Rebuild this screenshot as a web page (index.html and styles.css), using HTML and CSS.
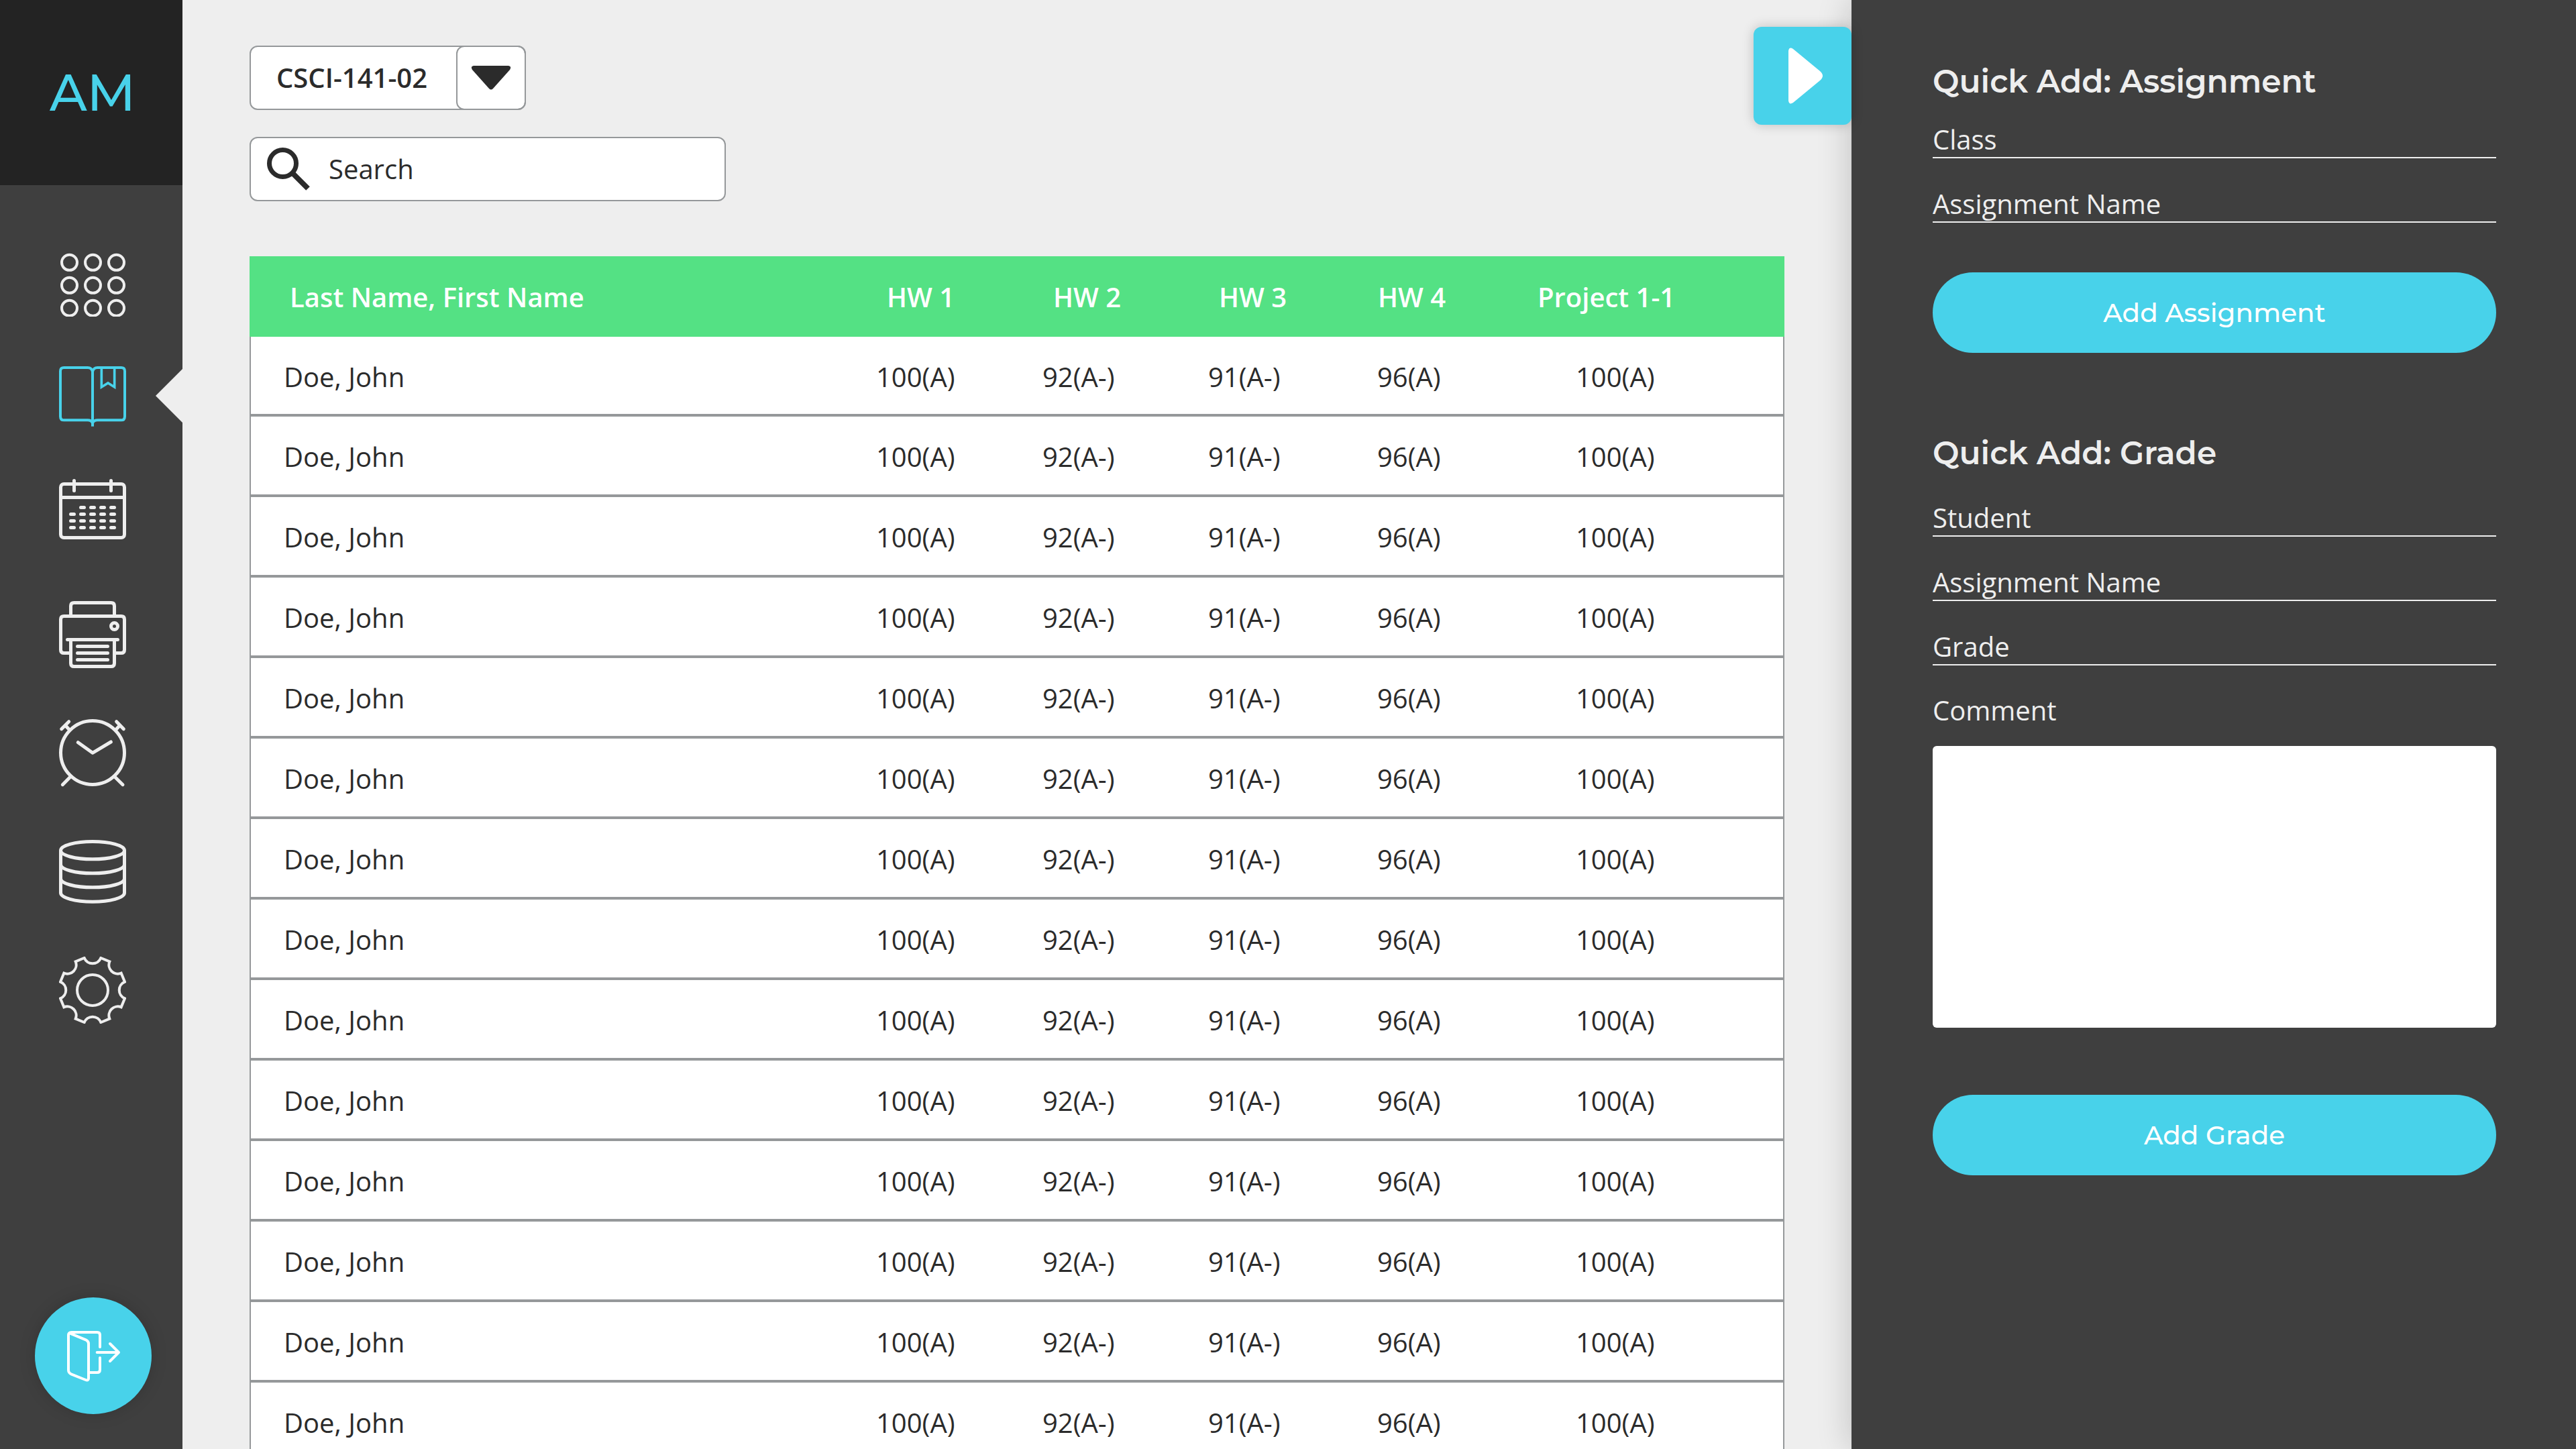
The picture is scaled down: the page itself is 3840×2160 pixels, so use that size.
FILE: index.html
```html
<!DOCTYPE html>
<html lang="en">
<head>
<meta charset="utf-8">
<meta name="viewport" content="width=device-width, initial-scale=1">
<title>Gradebook</title>
<link rel="stylesheet" href="styles.css">
</head>
<body>
<div class="app">
  <aside class="sidebar">
    <a class="logo" href="#">AM</a>
    <nav class="nav" aria-label="Main">
      <a class="nav-link" href="#" aria-label="Dashboard">
        <svg class="icon" width="100" height="96" viewBox="84 78 300 288" stroke-width="12">
          <circle cx="130.5" cy="124" r="34.5"/><circle cx="235.5" cy="124" r="34.5"/><circle cx="340.5" cy="124" r="34.5"/>
          <circle cx="130.5" cy="226" r="34.5"/><circle cx="235.5" cy="226" r="34.5"/><circle cx="340.5" cy="226" r="34.5"/>
          <circle cx="130.5" cy="328" r="34.5"/><circle cx="235.5" cy="328" r="34.5"/><circle cx="340.5" cy="328" r="34.5"/>
        </svg>
      </a>
      <a class="nav-link nav-link--active" href="#" aria-label="Gradebook" aria-current="page">
        <svg class="icon" width="100" height="94" viewBox="84 588 300 282" stroke-width="12">
          <path d="M234 612Q230 594 212 594H106Q90 594 90 610V812Q90 829 106 829H212Q228 829 234 842"/>
          <path d="M234 612Q238 594 256 594H362Q378 594 378 610V812Q378 829 362 829H256Q240 829 234 842"/>
          <path d="M234 604V857"/>
          <path stroke-width="11" d="M274 594V681L303 663L332 681V594"/>
        </svg>
      </a>
      <a class="nav-link" href="#" aria-label="Calendar">
        <svg class="icon" width="100" height="108" viewBox="84 1092 300 324" stroke-width="15" stroke-linecap="round">
          <rect x="91.5" y="1114.5" width="285" height="240" rx="14"/>
          <path d="M92 1174.5H376M151.5 1099.5V1144.5M316.5 1099.5V1144.5"/>
          <path d="M181.5 1219.5h15m30 0h15m30 0h15m30 0h15M136.5 1249.5h15m30 0h15m30 0h15m30 0h15m30 0h15M136.5 1279.5h15m30 0h15m30 0h15m30 0h15m30 0h15M136.5 1309.5h15m30 0h15m30 0h15m30 0h15m30 0h15"/>
        </svg>
      </a>
      <a class="nav-link" href="#" aria-label="Print">
        <svg class="icon" width="100" height="102" viewBox="84 108 300 306" stroke-width="15">
          <path d="M136.5 340.5H106Q91.5 340.5 91.5 326V190Q91.5 175.5 106 175.5H362Q376.5 175.5 376.5 190V326Q376.5 340.5 362 340.5H331.5"/>
          <path d="M136.5 175V130Q136.5 115.5 151 115.5H317Q331.5 115.5 331.5 130V175M136.5 280V386Q136.5 400.5 151 400.5H317Q331.5 400.5 331.5 386V280"/>
          <path stroke-linecap="round" d="M121.5 280.5H346.5M166.5 310.5H301.5M166.5 340.5H301.5M166.5 370.5H301.5"/>
          <circle cx="331.5" cy="220.5" r="15"/>
        </svg>
      </a>
      <a class="nav-link" href="#" aria-label="Reminders">
        <svg class="icon" width="100" height="106" viewBox="84 636 300 318" stroke-width="15" stroke-linecap="round" stroke-linejoin="round">
          <circle cx="234" cy="786" r="142.5"/>
          <path d="M169 740L234 787L316 738M137 892L100 929M331 892L369 929M95 680L128 647M114 666L130 683M341 647L373 680M354 666L338 683"/>
        </svg>
      </a>
      <a class="nav-link" href="#" aria-label="Data">
        <svg class="icon" width="100" height="100" viewBox="84 96 300 300" stroke-width="15">
          <ellipse cx="234" cy="143" rx="142.5" ry="39.5"/>
          <path d="M91.5 143V333A142.5 39.5 0 0 0 376.5 333V143M91.5 206A142.5 39.5 0 0 0 376.5 206M91.5 269A142.5 39.5 0 0 0 376.5 269"/>
        </svg>
      </a>
      <a class="nav-link" href="#" aria-label="Settings">
        <svg class="icon" width="100" height="100" viewBox="84 618 300 300" stroke-width="12">
          <circle cx="234" cy="768" r="69"/>
          <path d="M271 624L310 640A40 40 0 0 0 362 692L378 731A40 40 0 0 0 378 805L362 844A40 40 0 0 0 310 896L271 912A40 40 0 0 0 197 912L158 896A40 40 0 0 0 106 844L90 805A40 40 0 0 0 90 731L106 692A40 40 0 0 0 158 640L197 624A40 40 0 0 0 271 624Z"/>
        </svg>
      </a>
    </nav>
    <button class="logout" type="button" aria-label="Log out">
      <svg class="icon" width="174" height="174" viewBox="66 102 522 522" stroke-width="12" stroke-linecap="round" stroke-linejoin="round">
        <path d="M222 262L294 292Q306 298 306 309V464Q306 476 293 471L230 446Q216 440 216 427V272Q216 258 230 258H345Q357 258 357 270V324M357 372V425Q357 438 345 438H308"/>
        <path d="M344 348H440M402 309L441 348L402 387"/>
      </svg>
    </button>
  </aside>

  <main class="main">
    <div class="class-picker">
      <select class="class-select" aria-label="Class">
        <option>CSCI-141-02</option>
      </select>
      <span class="class-arrow">
        <svg width="60" height="36" viewBox="0 0 60 36"><path fill="#2b2b2b" d="M4 0H56Q61 1 58 6L33 34Q30 37 27 34L2 6Q-1 1 4 0Z"/></svg>
      </span>
    </div>
    <label class="search">
      <svg width="64" height="64" viewBox="0 0 64 64" fill="none" stroke="#2b2b2b">
        <circle cx="23.5" cy="23.5" r="20" stroke-width="7"/>
        <path stroke-width="8" d="M38 38L61 61"/>
      </svg>
      <input class="search-input" type="search" placeholder="Search" aria-label="Search">
    </label>

    <table class="grades">
      <colgroup>
        <col><col class="col-hw1"><col class="col-hw2"><col class="col-hw3"><col class="col-hw4"><col class="col-project">
      </colgroup>
      <thead>
        <tr><th>Last Name, First Name</th><th>HW 1</th><th>HW 2</th><th>HW 3</th><th>HW 4</th><th>Project 1-1</th></tr>
      </thead>
      <tbody>
        <tr><td>Doe, John</td><td>100(A)</td><td>92(A-)</td><td>91(A-)</td><td>96(A)</td><td>100(A)</td></tr>
        <tr><td>Doe, John</td><td>100(A)</td><td>92(A-)</td><td>91(A-)</td><td>96(A)</td><td>100(A)</td></tr>
        <tr><td>Doe, John</td><td>100(A)</td><td>92(A-)</td><td>91(A-)</td><td>96(A)</td><td>100(A)</td></tr>
        <tr><td>Doe, John</td><td>100(A)</td><td>92(A-)</td><td>91(A-)</td><td>96(A)</td><td>100(A)</td></tr>
        <tr><td>Doe, John</td><td>100(A)</td><td>92(A-)</td><td>91(A-)</td><td>96(A)</td><td>100(A)</td></tr>
        <tr><td>Doe, John</td><td>100(A)</td><td>92(A-)</td><td>91(A-)</td><td>96(A)</td><td>100(A)</td></tr>
        <tr><td>Doe, John</td><td>100(A)</td><td>92(A-)</td><td>91(A-)</td><td>96(A)</td><td>100(A)</td></tr>
        <tr><td>Doe, John</td><td>100(A)</td><td>92(A-)</td><td>91(A-)</td><td>96(A)</td><td>100(A)</td></tr>
        <tr><td>Doe, John</td><td>100(A)</td><td>92(A-)</td><td>91(A-)</td><td>96(A)</td><td>100(A)</td></tr>
        <tr><td>Doe, John</td><td>100(A)</td><td>92(A-)</td><td>91(A-)</td><td>96(A)</td><td>100(A)</td></tr>
        <tr><td>Doe, John</td><td>100(A)</td><td>92(A-)</td><td>91(A-)</td><td>96(A)</td><td>100(A)</td></tr>
        <tr><td>Doe, John</td><td>100(A)</td><td>92(A-)</td><td>91(A-)</td><td>96(A)</td><td>100(A)</td></tr>
        <tr><td>Doe, John</td><td>100(A)</td><td>92(A-)</td><td>91(A-)</td><td>96(A)</td><td>100(A)</td></tr>
        <tr><td>Doe, John</td><td>100(A)</td><td>92(A-)</td><td>91(A-)</td><td>96(A)</td><td>100(A)</td></tr>
      </tbody>
    </table>
  </main>

  <aside class="panel">
    <button class="panel-toggle" type="button" aria-label="Collapse panel">
      <svg width="52" height="84" viewBox="0 0 52 84"><path fill="#fff" d="M0 5Q1 -2 7 2L47 35Q55 42 47 49L7 82Q1 86 0 79Z"/></svg>
    </button>
    <form class="quick-form">
      <h2 class="quick-title">Quick Add: Assignment</h2>
      <div class="fields">
        <input class="field" type="text" placeholder="Class" aria-label="Class">
        <input class="field" type="text" placeholder="Assignment Name" aria-label="Assignment Name">
      </div>
      <button class="submit submit--assignment" type="button">Add Assignment</button>
    </form>
    <form class="quick-form quick-form--grade">
      <h2 class="quick-title">Quick Add: Grade</h2>
      <div class="fields">
        <input class="field" type="text" placeholder="Student" aria-label="Student">
        <input class="field" type="text" placeholder="Assignment Name" aria-label="Assignment Name">
        <input class="field" type="text" placeholder="Grade" aria-label="Grade">
        <label class="comment-label" for="comment">Comment</label>
      </div>
      <textarea class="comment" id="comment"></textarea>
      <button class="submit submit--grade" type="button">Add Grade</button>
    </form>
  </aside>
</div>
</body>
</html>
```
FILE: styles.css
```css
:root {
  --cyan: #48d2ea;
  --green: #54e184;
  --dark: #3f3f3f;
  --darker: #232323;
  --ink: #2b2b2b;
  --light: #eeeeee;
  --line: #95989a;
  --body-font: "Open Sans", sans-serif;
  --title-font: "Montserrat", "Inter", sans-serif;
}

* {
  box-sizing: border-box;
}

body {
  margin: 0;
  background: var(--light);
  color: var(--ink);
  font: 40px/54px var(--body-font);
}

button,
input,
select,
textarea {
  font: inherit;
  color: inherit;
  border: 0;
  margin: 0;
  padding: 0;
}

svg {
  display: block;
  flex: none;
}

.app {
  display: flex;
  height: 100vh;
  overflow: hidden;
}

/* Sidebar */

.sidebar {
  flex: none;
  display: flex;
  flex-direction: column;
  width: 272px;
  background: var(--dark);
}

.logo {
  display: flex;
  align-items: center;
  justify-content: center;
  height: 276px;
  padding-left: 4px;
  background: var(--darker);
  color: var(--cyan);
  font: 500 76px/104px var(--title-font);
  text-decoration: none;
}

.nav {
  flex: 1;
  display: flex;
  flex-direction: column;
  gap: 74px;
  padding-top: 100px;
}

.nav-link {
  position: relative;
  padding-left: 88px;
  color: var(--light);
}

.nav-link--active {
  color: var(--cyan);
}

.nav-link--active::after {
  content: "";
  position: absolute;
  top: 4px;
  right: 0;
  width: 40px;
  height: 80px;
  background: var(--light);
  clip-path: polygon(100% 0, 100% 100%, 0 50%);
}

.icon {
  fill: none;
  stroke: currentColor;
}

.logout {
  width: 174px;
  height: 174px;
  margin: 0 0 52px 52px;
  border-radius: 50%;
  background: var(--cyan);
  color: #fff;
  box-shadow: 0 0 24px rgba(0, 0, 0, 0.16);
}

/* Gradebook */

.main {
  flex: 1;
  min-width: 0;
  padding: 68px 100px 0;
}

.class-picker {
  position: relative;
  width: 412px;
  margin-bottom: 40px;
}

.class-select {
  display: block;
  appearance: none;
  width: 100%;
  height: 96px;
  padding: 0 120px 0 38px;
  border: 2px solid var(--line);
  border-radius: 12px;
  background: #fff;
  font-weight: 600;
}

.class-arrow {
  position: absolute;
  top: 0;
  right: 0;
  display: flex;
  align-items: center;
  justify-content: center;
  width: 104px;
  height: 96px;
  border: 2px solid var(--line);
  border-radius: 12px;
  pointer-events: none;
}

.search {
  display: flex;
  align-items: center;
  gap: 28px;
  width: 710px;
  height: 96px;
  margin-bottom: 82px;
  padding: 0 24px;
  border: 2px solid var(--line);
  border-radius: 12px;
  background: #fff;
}

.search-input {
  flex: 1;
  min-width: 0;
  appearance: none;
  background: none;
}

.search-input::placeholder {
  color: var(--ink);
  opacity: 1;
}

.grades {
  width: 100%;
  table-layout: fixed;
  border-collapse: separate;
  border-spacing: 0;
}

.col-hw1 { width: 248px; }
.col-hw2 { width: 247px; }
.col-hw3 { width: 252px; }
.col-hw4 { width: 238px; }
.col-project { width: 369px; }

.grades th,
.grades td {
  height: 120px;
  padding: 0;
  text-align: left;
  white-space: nowrap;
}

.grades th {
  padding-top: 2px;
  padding-left: 16px;
  background: var(--green);
  color: #fff;
  font-weight: 600;
}

.grades th:first-child {
  padding-left: 60px;
}

.grades th:nth-child(n + 5) {
  padding-left: 1px;
}

.grades td {
  padding-top: 4px;
  border-bottom: 4px solid var(--line);
  background: #fff;
}

.grades tr:first-child td {
  height: 119px;
}

.grades td:first-child {
  padding-left: 49px;
  border-left: 2px solid var(--line);
}

.grades td:last-child {
  padding-left: 58px;
  border-right: 2px solid var(--line);
}

/* Quick add panel */

.panel {
  position: relative;
  flex: none;
  width: 1080px;
  padding: 88px 119px 0 121px;
  background: var(--dark);
  color: var(--light);
  box-shadow: 0 0 48px rgba(0, 0, 0, 0.2);
}

.panel-toggle {
  position: absolute;
  top: 40px;
  left: -146px;
  display: flex;
  align-items: center;
  width: 146px;
  height: 146px;
  padding-left: 52px;
  border-radius: 12px;
  background: var(--cyan);
  box-shadow: 0 0 18px rgba(0, 0, 0, 0.2);
}

.quick-form {
  display: flex;
  flex-direction: column;
}

.quick-form--grade {
  margin-top: 116px;
}

.quick-title {
  margin: 0 0 26px;
  padding-top: 2px;
  font: 600 47px/64px var(--title-font);
}

.quick-form--grade .quick-title {
  margin-bottom: 36px;
}

.fields {
  display: flex;
  flex-direction: column;
  gap: 40px;
}

.field {
  width: 100%;
  height: 56px;
  border-bottom: 2px solid var(--light);
  border-radius: 0;
  background: none;
}

.field::placeholder {
  color: var(--light);
  opacity: 1;
}

.comment {
  height: 420px;
  margin-top: 26px;
  padding: 24px;
  border-radius: 6px;
  background: #fff;
  color: var(--ink);
  resize: none;
}

.submit {
  height: 120px;
  border-radius: 60px;
  background: var(--cyan);
  color: #fff;
  font: 500 39px/54px var(--title-font);
}

.submit--assignment {
  margin-top: 74px;
}

.submit--grade {
  margin-top: 100px;
}
```
